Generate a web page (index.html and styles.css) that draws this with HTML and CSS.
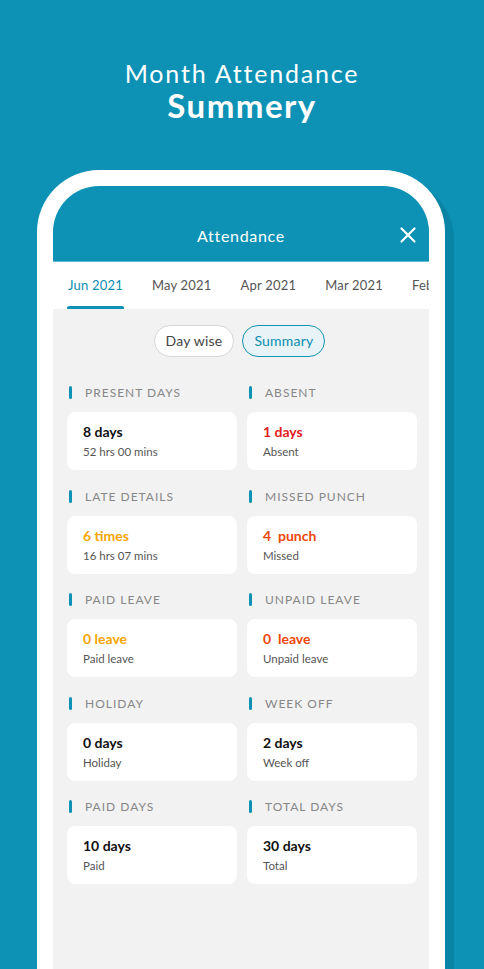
FILE: index.html
```html
<!DOCTYPE html>
<html>
<head>
<meta charset="utf-8">
<link rel="stylesheet" href="styles.css">
</head>
<body>
<div class="page">
  <div class="hero">
    <div class="hero-sub">Month Attendance</div>
    <div class="hero-title">Summery</div>
  </div>
  <div class="phone">
    <div class="screen">
      <div class="notch"><span class="pill"></span></div>
      <div class="header">
        <span class="header-title">Attendance</span>
        <svg class="close" width="16" height="16" viewBox="0 0 16 16"><path d="M1.5 1.5 L14.5 14.5 M14.5 1.5 L1.5 14.5" stroke="#fff" stroke-width="2.2" stroke-linecap="round"/></svg>
      </div>
      <div class="tabs">
        <div class="tab active">Jun 2021</div>
        <div class="tab">May 2021</div>
        <div class="tab">Apr 2021</div>
        <div class="tab">Mar 2021</div>
        <div class="tab">Feb 2021</div>
      </div>
      <div class="content">
        <div class="seg">
          <div class="seg-btn">Day wise</div>
          <div class="seg-btn on">Summary</div>
        </div>
        <div class="grid">
          <div class="cell"><div class="label">PRESENT DAYS</div><div class="card"><div class="val">8 days</div><div class="sub">52 hrs 00 mins</div></div></div>
          <div class="cell"><div class="label">ABSENT</div><div class="card"><div class="val red">1 days</div><div class="sub">Absent</div></div></div>
          <div class="cell"><div class="label">LATE DETAILS</div><div class="card"><div class="val amber">6 times</div><div class="sub">16 hrs 07 mins</div></div></div>
          <div class="cell"><div class="label">MISSED PUNCH</div><div class="card"><div class="val orange">4&nbsp; punch</div><div class="sub">Missed</div></div></div>
          <div class="cell"><div class="label">PAID LEAVE</div><div class="card"><div class="val amber">0 leave</div><div class="sub">Paid leave</div></div></div>
          <div class="cell"><div class="label">UNPAID LEAVE</div><div class="card"><div class="val orange">0&nbsp; leave</div><div class="sub">Unpaid leave</div></div></div>
          <div class="cell"><div class="label">HOLIDAY</div><div class="card"><div class="val">0 days</div><div class="sub">Holiday</div></div></div>
          <div class="cell"><div class="label">WEEK OFF</div><div class="card"><div class="val">2 days</div><div class="sub">Week off</div></div></div>
          <div class="cell"><div class="label">PAID DAYS</div><div class="card"><div class="val">10 days</div><div class="sub">Paid</div></div></div>
          <div class="cell"><div class="label">TOTAL DAYS</div><div class="card"><div class="val">30 days</div><div class="sub">Total</div></div></div>
        </div>
      </div>
    </div>
  </div>
</div>
</body>
</html>
```

FILE: styles.css
```css
* { box-sizing: border-box; }
html, body { margin: 0; padding: 0; }
body {
  background: #0d92b6;
  font-family: "Lato", "Noto Sans", sans-serif;
  width: 484px;
  height: 969px;
  overflow: hidden;
}
.page { width: 484px; height: 969px; overflow: hidden; }
.hero {
  padding-top: 57px;
  text-align: center;
  color: #fff;
  height: 170px;
}
.hero-sub {
  font-size: 25px;
  font-weight: 400;
  letter-spacing: 1.8px;
  line-height: 32px;
}
.hero-title {
  font-size: 33px;
  font-weight: 700;
  line-height: 34px;
  letter-spacing: 1.5px;
  margin-top: -1px;
}
.phone {
  margin-left: 37px;
  width: 408px;
  height: 860px;
  border: 16px solid #fff;
  border-bottom: none;
  border-radius: 62px 62px 0 0;
  background: #fff;
  box-shadow: 9px 8px 0 #0a84a5;
}
.screen {
  position: relative;
  width: 376px;
  height: 100%;
  border-radius: 46px 46px 0 0;
  overflow: hidden;
  background: #f2f2f2;
}
.notch {
  position: absolute;
  left: 83px;
  top: 0;
  width: 211px;
  height: 23px;
  background: #fff;
  border-radius: 0 0 11px 11px;
}
.pill {
  position: absolute;
  left: 85px;
  top: 5px;
  width: 44px;
  height: 5px;
  border-radius: 3px;
  background: #e6e6e6;
}
.header {
  position: relative;
  height: 76px;
  background: #0d92b6;
  padding-top: 23px;
  display: flex;
  align-items: center;
  justify-content: center;
  border-bottom: 1px solid #63bcd4;
}
.header-title {
  color: #fff;
  font-size: 16px;
  letter-spacing: 0.7px;
}
.close {
  position: absolute;
  right: 13px;
  top: 41px;
}
.tabs {
  height: 47px;
  background: #fff;
  display: flex;
  padding-left: 15px;
  gap: 29px;
  white-space: nowrap;
  overflow: hidden;
}
.tab {
  position: relative;
  font-size: 13px;
  color: #555;
  line-height: 46px;
  letter-spacing: 0.2px;
  flex: none;
}
.tab.active { color: #0b8db1; }
.tab.active::after {
  content: "";
  position: absolute;
  left: -1px;
  right: -1px;
  bottom: 0;
  height: 3px;
  border-radius: 2px 2px 0 0;
  background: #0d92b6;
}
.content {
  padding: 16px 13px 0 14px;
}
.seg {
  display: flex;
  justify-content: center;
  gap: 8px;
  padding-right: 4px;
}
.seg-btn {
  height: 32px;
  border-radius: 16px;
  border: 1px solid #d6d6d6;
  background: #fff;
  padding: 0 11px;
  font-size: 14px;
  line-height: 30px;
  color: #444;
  letter-spacing: 0.2px;
}
.seg-btn.on {
  border: 1.5px solid #1493b5;
  background: #e7f3f6;
  color: #0b8db1;
}
.grid {
  margin-top: 29px;
  display: grid;
  grid-template-columns: 170px 170px;
  column-gap: 10px;
  row-gap: 19.5px;
}
.label {
  position: relative;
  height: 14px;
  line-height: 14px;
  font-size: 12px;
  letter-spacing: 1px;
  color: #878787;
  padding-left: 18px;
  margin-bottom: 12px;
}
.label::before {
  content: "";
  position: absolute;
  left: 2px;
  top: 0;
  width: 3px;
  height: 13px;
  border-radius: 2px;
  background: #0d92b6;
}
.card {
  height: 58px;
  background: #fff;
  border-radius: 8px;
  padding: 12px 16px 0;
}
.val {
  font-size: 14px;
  font-weight: 700;
  color: #111;
  line-height: 16px;
}
.sub {
  margin-top: 4px;
  font-size: 11.5px;
  color: #555;
  line-height: 16px;
}
.red { color: #e3201c; }
.amber { color: #f6a500; }
.orange { color: #ec470b; }
```
